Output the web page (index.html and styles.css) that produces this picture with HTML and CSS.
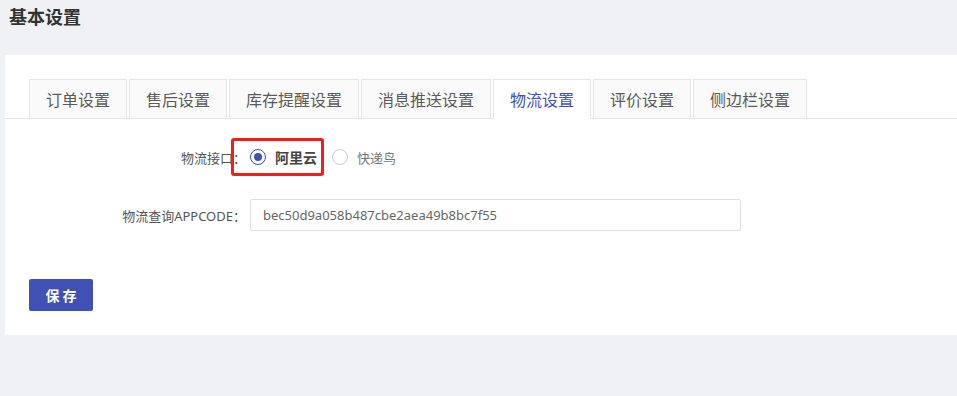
FILE: index.html
```html
<!DOCTYPE html>
<html lang="zh-CN">
<head>
  <meta charset="UTF-8" />
  <title>基本设置</title>
  <link rel="stylesheet" href="styles.css">
</head>
<body>
  <h1 class="page-title">基本设置</h1>

  <div class="panel">
    <ul class="tabs">
      <li class="tab">订单设置</li>
      <li class="tab">售后设置</li>
      <li class="tab">库存提醒设置</li>
      <li class="tab">消息推送设置</li>
      <li class="tab active">物流设置</li>
      <li class="tab">评价设置</li>
      <li class="tab">侧边栏设置</li>
    </ul>

    <form class="settings-form">
      <div class="form-row row-radio">
        <label class="form-label">物流接口：</label>
        <div class="radio-group">
          <span class="highlight"></span>
          <label class="radio checked"><span class="radio-dot"></span>阿里云</label>
          <label class="radio"><span class="radio-dot"></span>快递鸟</label>
        </div>
      </div>

      <div class="form-row row-input">
        <label class="form-label">物流查询APPCODE：</label>
        <input class="text-input" type="text" value="bec50d9a058b487cbe2aea49b8bc7f55" />
      </div>

      <button type="button" class="save-btn">保 存</button>
    </form>
  </div>
</body>
</html>
```

FILE: styles.css
```css
* {
  box-sizing: border-box;
}
body {
  margin: 0;
  background-color: #f0f1f5;
  font-family: "Noto Sans", "Noto Sans CJK SC", sans-serif;
  color: #555;
}
.page-title {
  margin: 0;
  height: 55px;
  padding: 3px 9px 0;
  font-size: 18px;
  font-weight: 700;
  color: #333;
  line-height: 28px;
}
.panel {
  background: #fff;
  margin-left: 5px;
  padding: 24px 0 24px;
}
.tabs {
  list-style: none;
  margin: 0;
  padding: 0 24px;
  display: flex;
  gap: 2px;
  border-bottom: 1px solid #e6e6e6;
}
.tab {
  height: 40px;
  margin-bottom: -1px;
  padding: 0 16px;
  border: 1px solid #e6e6e6;
  background: #fafafa;
  font-size: 16px;
  line-height: 40px;
  color: #5a5a5a;
  white-space: nowrap;
}
.tab.active {
  background: #fff;
  border-bottom-color: #fff;
  color: #3f51b5;
}
.settings-form {
  padding: 19px 24px 0;
}
.form-row {
  display: flex;
  align-items: center;
}
.form-label {
  width: 221px;
  padding-right: 4px;
  text-align: right;
  font-size: 13px;
  color: #555;
  flex-shrink: 0;
}
.row-radio {
  height: 38px;
}
.radio-group {
  position: relative;
  display: flex;
  align-items: center;
  gap: 15px;
}
.highlight {
  position: absolute;
  left: -19px;
  top: 50%;
  margin-top: -19px;
  width: 93px;
  height: 38px;
  border: 3px solid #f41d1d;
  border-radius: 3px;
}
.radio {
  display: flex;
  align-items: center;
  gap: 9px;
  font-size: 13px;
  color: #777;
}
.radio.checked {
  font-size: 14px;
  font-weight: 600;
  color: #444;
}
.radio-dot {
  width: 16px;
  height: 16px;
  border-radius: 50%;
  border: 1px solid #ccc;
  position: relative;
}
.radio.checked .radio-dot {
  border-color: #3f51b5;
}
.radio.checked .radio-dot::after {
  content: "";
  position: absolute;
  left: 3px;
  top: 3px;
  width: 8px;
  height: 8px;
  border-radius: 50%;
  background: #3f51b5;
}
.row-input {
  margin-top: 23px;
}
.text-input {
  width: 491px;
  height: 32px;
  padding: 0 12px;
  border: 1px solid #e0e0e0;
  border-radius: 2px;
  font-family: "Noto Sans", sans-serif;
  font-size: 13px;
  color: #666;
}
.save-btn {
  display: block;
  margin-top: 48px;
  width: 64px;
  height: 32px;
  border: none;
  border-radius: 2px;
  background: #3f51b5;
  color: #fff;
  font-family: "Noto Sans CJK SC", sans-serif;
  font-size: 14px;
  font-weight: 600;
}
```
